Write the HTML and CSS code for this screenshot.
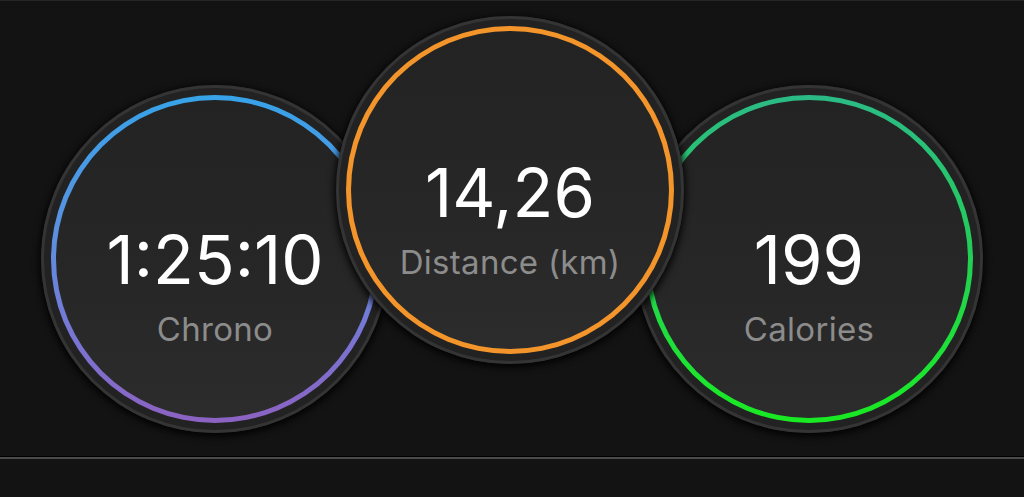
FILE: index.html
```html
<!DOCTYPE html>
<html lang="en">
<head>
    <meta charset="UTF-8">
    <meta name="viewport" content="width=device-width, initial-scale=1.0">
    <title>Workout summary</title>
    <link rel="stylesheet" href="styles.css">
</head>
<body>
    <div id="summary">
        <div id="stats">
            <div class="gauge side">
                <div class="ring ring-chrono">
                    <div class="face">
                        <p class="value">1:25:10</p>
                        <p class="label">Chrono</p>
                    </div>
                </div>
            </div>
            <div class="gauge middle">
                <div class="ring ring-distance">
                    <div class="face">
                        <p class="value">14,26</p>
                        <p class="label">Distance (km)</p>
                    </div>
                </div>
            </div>
            <div class="gauge side right">
                <div class="ring ring-calories">
                    <div class="face">
                        <p class="value">199</p>
                        <p class="label">Calories</p>
                    </div>
                </div>
            </div>
        </div>
        <hr id="divider">
    </div>
</body>
</html>
```

FILE: styles.css
```css
body {
    margin: 0;
    background-color: #131313;
    font-family: "Inter", "Noto Sans", sans-serif;
}
#summary {
    height: 497px;
    overflow: hidden;
    border-top: 1px solid #262626;
    box-sizing: border-box;
}
#stats {
    display: flex;
    align-items: flex-start;
    height: 455px;
    padding-top: 15px;
    padding-left: 41px;
    box-sizing: border-box;
}
.gauge {
    width: 348px;
    height: 348px;
    flex-shrink: 0;
    border-radius: 50%;
    padding: 10px;
    box-sizing: border-box;
    background-color: #222222;
    box-shadow: inset 0 0 0 3px #343434, 0 2px 7px 2px rgba(0, 0, 0, 0.85);
    position: relative;
}
.side {
    margin-top: 69px;
}
.middle {
    margin-left: -53px;
    z-index: 2;
}
.right {
    margin-left: -49px;
}
.ring {
    width: 100%;
    height: 100%;
    border-radius: 50%;
    padding: 5px;
    box-sizing: border-box;
}
.ring-chrono {
    background: linear-gradient(180deg, #37a3e8 0%, #5e8fe0 45%, #7a74d2 75%, #8c62c2 100%);
}
.ring-distance {
    background: #f3952b;
}
.ring-calories {
    background: linear-gradient(180deg, #2bbb86 0%, #24cc5a 45%, #1ee03a 75%, #19ea22 100%);
}
.face {
    width: 100%;
    height: 100%;
    border-radius: 50%;
    background: linear-gradient(180deg, #232323 0%, #272727 60%, #2c2c2c 100%);
    display: flex;
    flex-direction: column;
    align-items: center;
    box-sizing: border-box;
    padding-top: 126px;
}
.value {
    margin: 0;
    color: #ffffff;
    font-size: 67px;
    line-height: 1;
    font-weight: 400;
}
.label {
    margin: 20px 0 0 0;
    color: #8c8c8c;
    font-size: 33px;
    line-height: 1;
    font-weight: 400;
    letter-spacing: 0.3px;
}
.middle .face {
    padding-top: 128px;
}
#divider {
    margin: 0;
    border: none;
    border-top: 1px solid #000000;
    height: 2px;
    background-color: #4a4a4a;
}
```
